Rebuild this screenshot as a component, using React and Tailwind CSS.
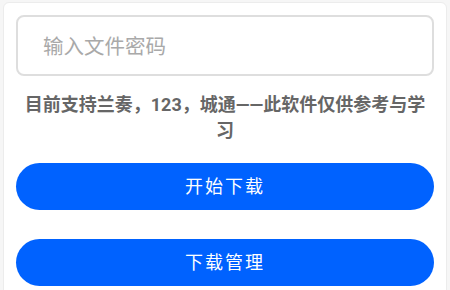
export default function App() {
  return (
    <div
      className="h-[290px] w-[450px] overflow-hidden bg-[#f6f6f6] px-[3px] pt-[2px]"
      style={{ fontFamily: 'Roboto, "Noto Sans CJK SC", sans-serif' }}
    >
      <div className="h-[300px] rounded-[6px] border border-[#ececec] bg-white px-[12px] pt-[12px]">
        {/* 密码输入 */}
        <div className="flex h-[61px] items-center rounded-[8px] border-2 border-[#dedede] px-[25px] pt-[3px]">
          <input
            type="text"
            placeholder="输入文件密码"
            className="w-full bg-transparent text-[20.5px] text-[#444] outline-none placeholder:text-[#a9a9a9]"
          />
        </div>

        <p className="mt-[16px] px-[6px] text-center text-[18px] font-bold leading-[26px] text-[#666]">
          目前支持兰奏，123，城通——此软件仅供参考与学习
        </p>

        <button className="mt-[19px] flex h-[47px] w-full items-center justify-center rounded-full bg-[#0062ff] text-[18px] tracking-[2px] text-white">
          开始下载
        </button>

        <button className="mt-[29px] flex h-[47px] w-full items-center justify-center rounded-full bg-[#0062ff] text-[18px] tracking-[2px] text-white">
          下载管理
        </button>
      </div>
    </div>
  );
}
